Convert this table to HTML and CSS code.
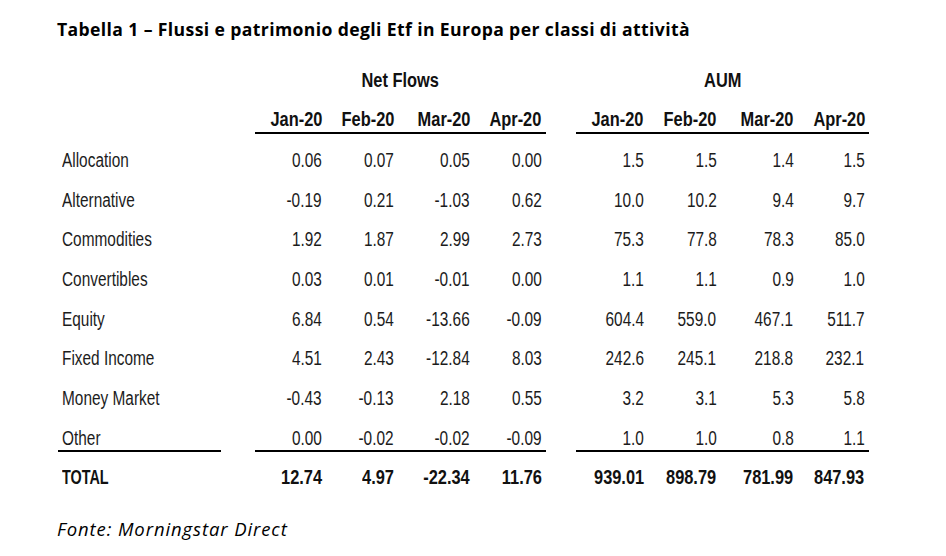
FILE: index.html
```html
<!DOCTYPE html>
<html lang="it">
<head>
<meta charset="utf-8">
<title>Tabella 1</title>
<link rel="stylesheet" href="styles.css">
</head>
<body>
<div class="page">
  <h1 class="title">Tabella 1 – Flussi e patrimonio degli Etf in Europa per classi di attività</h1>
  <table class="tbl">
    <colgroup>
      <col class="c-label"><col class="c-gap1">
      <col class="c-n1"><col class="c-n2"><col class="c-n3"><col class="c-n4">
      <col class="c-gap2">
      <col class="c-a1"><col class="c-a2"><col class="c-a3"><col class="c-a4">
    </colgroup>
    <thead>
      <tr class="grp">
        <th></th><th></th><th colspan="4" class="center"><span>Net Flows</span></th><th></th><th colspan="4" class="center"><span>AUM</span></th>
      </tr>
      <tr class="months">
        <th></th><th></th>
        <th class="ul"><span>Jan-20</span></th><th class="ul"><span>Feb-20</span></th><th class="ul"><span>Mar-20</span></th><th class="ul"><span>Apr-20</span></th>
        <th></th>
        <th class="ul"><span>Jan-20</span></th><th class="ul"><span>Feb-20</span></th><th class="ul"><span>Mar-20</span></th><th class="ul"><span>Apr-20</span></th>
      </tr>
    </thead>
    <tbody>
      <tr class="row"><td class="lbl"><span>Allocation</span></td><td></td><td><span>0.06</span></td><td><span>0.07</span></td><td><span>0.05</span></td><td><span>0.00</span></td><td></td><td><span>1.5</span></td><td><span>1.5</span></td><td><span>1.4</span></td><td><span>1.5</span></td></tr>
      <tr class="row"><td class="lbl"><span>Alternative</span></td><td></td><td><span>-0.19</span></td><td><span>0.21</span></td><td><span>-1.03</span></td><td><span>0.62</span></td><td></td><td><span>10.0</span></td><td><span>10.2</span></td><td><span>9.4</span></td><td><span>9.7</span></td></tr>
      <tr class="row"><td class="lbl"><span>Commodities</span></td><td></td><td><span>1.92</span></td><td><span>1.87</span></td><td><span>2.99</span></td><td><span>2.73</span></td><td></td><td><span>75.3</span></td><td><span>77.8</span></td><td><span>78.3</span></td><td><span>85.0</span></td></tr>
      <tr class="row"><td class="lbl"><span>Convertibles</span></td><td></td><td><span>0.03</span></td><td><span>0.01</span></td><td><span>-0.01</span></td><td><span>0.00</span></td><td></td><td><span>1.1</span></td><td><span>1.1</span></td><td><span>0.9</span></td><td><span>1.0</span></td></tr>
      <tr class="row"><td class="lbl"><span>Equity</span></td><td></td><td><span>6.84</span></td><td><span>0.54</span></td><td><span>-13.66</span></td><td><span>-0.09</span></td><td></td><td><span>604.4</span></td><td><span>559.0</span></td><td><span>467.1</span></td><td><span>511.7</span></td></tr>
      <tr class="row"><td class="lbl"><span>Fixed Income</span></td><td></td><td><span>4.51</span></td><td><span>2.43</span></td><td><span>-12.84</span></td><td><span>8.03</span></td><td></td><td><span>242.6</span></td><td><span>245.1</span></td><td><span>218.8</span></td><td><span>232.1</span></td></tr>
      <tr class="row"><td class="lbl"><span>Money Market</span></td><td></td><td><span>-0.43</span></td><td><span>-0.13</span></td><td><span>2.18</span></td><td><span>0.55</span></td><td></td><td><span>3.2</span></td><td><span>3.1</span></td><td><span>5.3</span></td><td><span>5.8</span></td></tr>
      <tr class="last"><td class="lbl ul"><span>Other</span></td><td></td><td class="ul"><span>0.00</span></td><td class="ul"><span>-0.02</span></td><td class="ul"><span>-0.02</span></td><td class="ul"><span>-0.09</span></td><td></td><td class="ul"><span>1.0</span></td><td class="ul"><span>1.0</span></td><td class="ul"><span>0.8</span></td><td class="ul"><span>1.1</span></td></tr>
      <tr class="total"><td class="lbl tot"><span>TOTAL</span></td><td></td><td><span>12.74</span></td><td><span>4.97</span></td><td><span>-22.34</span></td><td><span>11.76</span></td><td></td><td><span>939.01</span></td><td><span>898.79</span></td><td><span>781.99</span></td><td><span>847.93</span></td></tr>
    </tbody>
  </table>
  <p class="source">Fonte: Morningstar Direct</p>
</div>
</body>
</html>
```

FILE: styles.css
```css
html, body {
  margin: 0;
  padding: 0;
  background: #ffffff;
}

.page {
  width: 946px;
  height: 556px;
  padding: 16.5px 0 0 57px;
  box-sizing: border-box;
  overflow: hidden;
}

.title {
  margin: 0;
  font-family: "Open Sans", "Liberation Sans", sans-serif;
  font-weight: 700;
  font-size: 17.6px;
  line-height: 24px;
  letter-spacing: 0.38px;
  color: #000000;
}

.tbl {
  margin: 14.1px 0 0 1px;
  width: 810.5px;
  table-layout: fixed;
  border-collapse: separate;
  border-spacing: 0;
  font-family: "Liberation Sans", Arial, sans-serif;
  font-size: 20px;
  line-height: 22px;
  color: #1c1c1c;
}

.c-label { width: 163px; }
.c-gap1 { width: 34px; }
.c-n1 { width: 71px; }
.c-n2 { width: 71.5px; }
.c-n3 { width: 76.5px; }
.c-n4 { width: 71.5px; }
.c-gap2 { width: 30.5px; }
.c-a1 { width: 71.8px; }
.c-a2 { width: 72.7px; }
.c-a3 { width: 77px; }
.c-a4 { width: 71px; }

.tbl th,
.tbl td {
  padding: 0 4px 2.7px 4px;
  height: 39.7px;
  box-sizing: border-box;
  vertical-align: bottom;
  text-align: right;
  white-space: nowrap;
  font-weight: 400;
}

.tbl span {
  display: inline-block;
  transform: scaleX(0.77);
  transform-origin: right center;
}

.tbl th {
  font-weight: 700;
  color: #111111;
}

.tbl th span {
  transform: scaleX(0.82);
}

.tbl th.center {
  text-align: center;
  padding-left: 0;
  padding-right: 0;
}

.tbl th.center span {
  transform-origin: center center;
}

.grp th { padding-bottom: 2.8px; }
.months th { padding-bottom: 2px; }

.tbl .lbl {
  text-align: left;
}

.tbl .lbl span {
  transform-origin: left center;
}

.last td {
  height: 39.8px;
  padding-bottom: 0.7px;
}

.tbl .ul {
  border-bottom: 2px solid #000000;
}

.total td {
  font-weight: 700;
  color: #111111;
  padding-bottom: 3.5px;
}

.total td span {
  transform: scaleX(0.82);
}

.total td.tot span {
  transform: scaleX(0.72);
}

.source {
  margin: 26px 0 0 0;
  font-family: "Open Sans", "Liberation Sans", sans-serif;
  font-style: italic;
  font-size: 18.5px;
  line-height: 24px;
  letter-spacing: 0.9px;
  color: #000000;
}
```
